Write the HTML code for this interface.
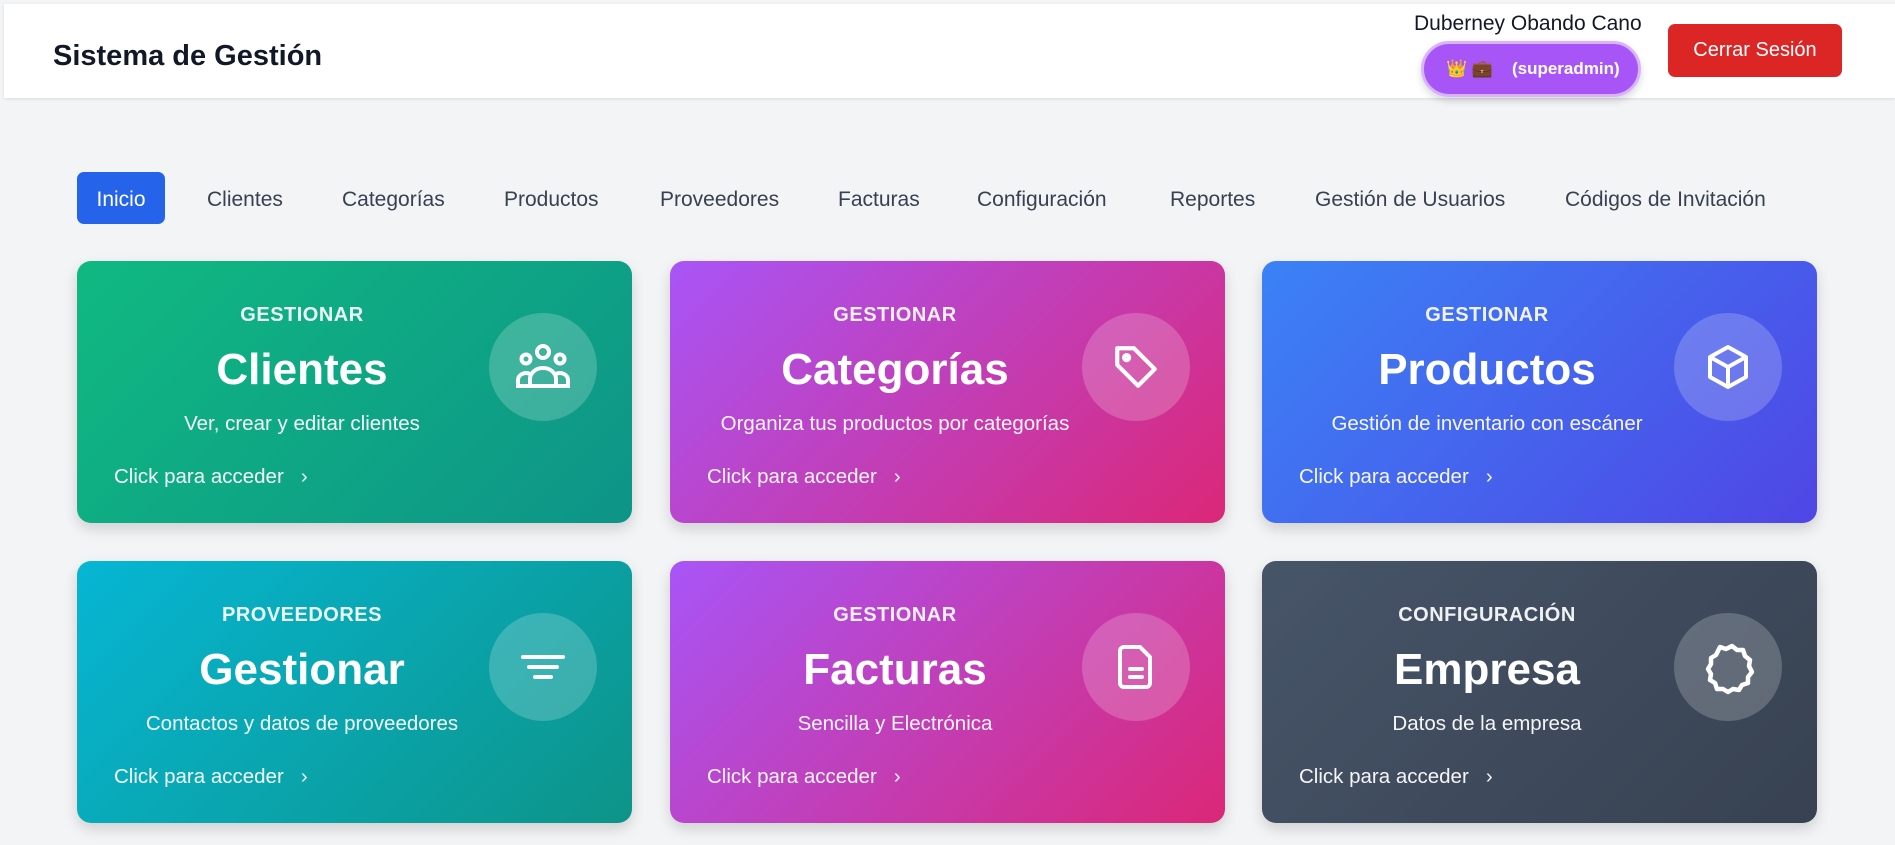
<!DOCTYPE html>
<html><head><meta charset="utf-8"><style>
*{box-sizing:border-box;margin:0;padding:0}
body{width:1895px;height:845px;overflow:hidden;background:#f3f4f6;font-family:"Liberation Sans","Noto Sans CJK JP",sans-serif;position:relative}
.hdr{position:absolute;left:4px;top:4px;width:1891px;height:94px;background:#fff;box-shadow:0 1px 3px rgba(0,0,0,.1)}
.title{position:absolute;left:49px;top:36px;font-size:29px;font-weight:bold;color:#111827}
.name{position:absolute;left:1410px;top:8px;font-size:21px;color:#111827}
.badge{position:absolute;width:220px;height:56px;border-radius:28px;background:#a855f7;border:3px solid #d8b4fe;color:#fff;font-weight:bold;font-size:17px;display:flex;align-items:center;padding-left:22px;box-shadow:0 4px 8px rgba(0,0,0,.15)}
.btn{position:absolute;width:174px;height:53px;border-radius:7px;background:#dc2626;color:#fff;font-size:20px;display:flex;align-items:center;justify-content:center}
.nav{position:absolute;top:174px;height:52px;font-size:21px;color:#374151;line-height:52px}
.inicio{left:77px;top:172px;width:88px;height:52px;line-height:55px;background:#2563eb;color:#fff;border-radius:7px;text-align:center}
.card{position:absolute;width:555px;height:262px;border-radius:14px;color:#fff;box-shadow:0 6px 14px rgba(0,0,0,.15);overflow:hidden}
.card .lb,.card .tt,.card .st{position:absolute;left:0;width:450px;text-align:center;white-space:nowrap}
.card .lb{top:43px;font-size:20px;font-weight:bold;letter-spacing:.5px;opacity:.92}
.card .tt{top:84px;font-size:44px;font-weight:bold}
.card .st{top:151px;font-size:20.5px;opacity:.95}
.card .ck{position:absolute;left:37px;top:204px;font-size:20.5px;opacity:.95}
.card .ic{position:absolute;left:412px;top:52px;width:108px;height:108px;border-radius:50%;background:rgba(255,255,255,.2);display:flex;align-items:center;justify-content:center}
</style></head><body>
<div class="hdr">
<div class="title">Sistema de Gestión</div>
<div class="name">Duberney Obando Cano</div>
<div class="badge" style="left:1417px;top:37px">👑 💼 &nbsp;&nbsp;&nbsp;(superadmin)</div>
<div class="btn" style="left:1664px;top:20px">Cerrar Sesión</div>
</div>
<div class="nav inicio">Inicio</div>
<div class="nav" style="left:207px">Clientes</div>
<div class="nav" style="left:342px">Categorías</div>
<div class="nav" style="left:504px">Productos</div>
<div class="nav" style="left:660px">Proveedores</div>
<div class="nav" style="left:838px">Facturas</div>
<div class="nav" style="left:977px">Configuración</div>
<div class="nav" style="left:1170px">Reportes</div>
<div class="nav" style="left:1315px">Gestión de Usuarios</div>
<div class="nav" style="left:1565px">Códigos de Invitación</div>

<div class="card" style="left:77px;top:261px;background:linear-gradient(135deg,#10b981,#0d9488)">
<div class="lb">GESTIONAR</div><div class="tt">Clientes</div><div class="st">Ver, crear y editar clientes</div><div class="ck">Click para acceder &nbsp;&nbsp;›</div>
<div class="ic"><svg width="56" height="48" viewBox="0 0 56 48" fill="none" stroke="#fff" stroke-width="4"><circle cx="28" cy="9" r="6"/><circle cx="11" cy="16" r="4.5"/><circle cx="45" cy="16" r="4.5"/><path d="M15 43V36a13 11 0 0 1 26 0v7zM15 43H3v-6a8 7 0 0 1 12-6M41 43h12v-6a8 7 0 0 0-12-6"/></svg></div></div>

<div class="card" style="left:670px;top:261px;background:linear-gradient(135deg,#a855f7,#db2777)">
<div class="lb">GESTIONAR</div><div class="tt">Categorías</div><div class="st">Organiza tus productos por categorías</div><div class="ck">Click para acceder &nbsp;&nbsp;›</div>
<div class="ic"><svg width="50" height="50" viewBox="0 0 24 24" fill="none" stroke="#fff" stroke-width="2" stroke-linejoin="round"><path d="M3 3h8l10 10-8 8L3 11z"/><circle cx="7.5" cy="7.5" r="1.2"/></svg></div></div>

<div class="card" style="left:1262px;top:261px;background:linear-gradient(135deg,#3b82f6,#4f46e5)">
<div class="lb">GESTIONAR</div><div class="tt">Productos</div><div class="st">Gestión de inventario con escáner</div><div class="ck">Click para acceder &nbsp;&nbsp;›</div>
<div class="ic"><svg width="48" height="48" viewBox="0 0 24 24" fill="none" stroke="#fff" stroke-width="2" stroke-linejoin="round"><path d="M12 2l9 5v10l-9 5-9-5V7z"/><path d="M3 7l9 5 9-5M12 12v10"/></svg></div></div>

<div class="card" style="left:77px;top:561px;background:linear-gradient(135deg,#06b6d4,#0d9488)">
<div class="lb">PROVEEDORES</div><div class="tt">Gestionar</div><div class="st">Contactos y datos de proveedores</div><div class="ck">Click para acceder &nbsp;&nbsp;›</div>
<div class="ic"><svg width="48" height="30" viewBox="0 0 48 30" stroke="#fff" stroke-width="4" stroke-linecap="round"><path d="M4 5h40M10 15h28M16 25h16"/></svg></div></div>

<div class="card" style="left:670px;top:561px;background:linear-gradient(135deg,#a855f7,#db2777)">
<div class="lb">GESTIONAR</div><div class="tt">Facturas</div><div class="st">Sencilla y Electrónica</div><div class="ck">Click para acceder &nbsp;&nbsp;›</div>
<div class="ic"><svg width="48" height="48" viewBox="0 0 24 24" fill="none" stroke="#fff" stroke-width="2" stroke-linejoin="round" stroke-linecap="round"><path d="M6 2h8l5 5v13a2 2 0 0 1-2 2H6a2 2 0 0 1-2-2V4a2 2 0 0 1 2-2z"/><path d="M9 13h6M9 17h6"/></svg></div></div>

<div class="card" style="left:1262px;top:561px;background:linear-gradient(135deg,#475569,#374151)">
<div class="lb">CONFIGURACIÓN</div><div class="tt">Empresa</div><div class="st">Datos de la empresa</div><div class="ck">Click para acceder &nbsp;&nbsp;›</div>
<div class="ic"><svg width="56" height="56" viewBox="0 0 56 56" fill="none" stroke="#fff" stroke-width="4.5" stroke-linejoin="round"><path d="M20 8l6 2 6-3 5 4 6 0 2 6 5 4-1 6 3 6-4 5 0 6-6 2-3 5-6-1-5 3-5-3-6 0-2-6-5-3 1-6-3-5 3-5 0-6 5-3z"/></svg></div></div>
</body></html>
